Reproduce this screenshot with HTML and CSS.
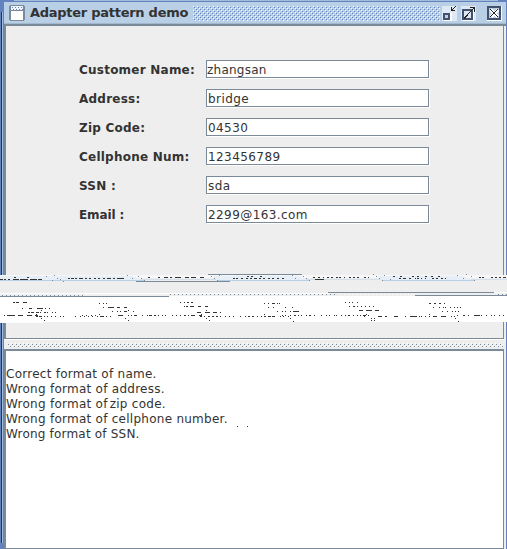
FILE: index.html
```html
<!DOCTYPE html>
<html lang="en">
<head>
<meta charset="utf-8">
<title>Adapter pattern demo</title>
<link rel="stylesheet" href="styles.css">
</head>
<body>
<div class="desktop">
<main class="window">
<header class="titlebar">
<svg class="app-icon" width="16" height="16" shape-rendering="crispEdges"><path fill="#7a8a99" d="M1 0h14v1h1v14h-1v1H1v-1H0V1h1z"/><path fill="#eef4fb" d="M2 1h12v4H2z"/><path fill="#fff" d="M2 6h12v9H2z"/><path stroke="#6382bf" stroke-dasharray="1 2" d="M3 2.5h11M4 4.5h10"/></svg>
<h1>Adapter pattern demo</h1>
<div class="grip"></div>
<div class="controls">
<svg width="15" height="15" shape-rendering="crispEdges"><path fill="#fff" d="M0 0h15v15H0z" opacity=".55"/><path fill="#fff" d="M2 7h8v8H2z"/><path fill="none" stroke="#42516f" stroke-width="2" d="M2 8h5v5H2z"/><path fill="#b8cfe5" d="M3 9h3v3H3z"/><path fill="#222" d="M9 1h1v3h3v1H9zM10 3h1v1h-1zM11 2h1v1h-1zM12 1h1v1h-1zM13 0h1v1h-1z"/></svg>
<svg width="15" height="15" shape-rendering="crispEdges"><path fill="#fff" d="M0 0h15v15H0z" opacity=".55"/><path fill="#fff" d="M2 4h11v11H2z"/><path fill="none" stroke="#42516f" stroke-width="2" d="M2 4h9v9H2z"/><path fill="#dbe7f3" d="M3 5h7v7H3z"/><path stroke="#222" fill="none" d="M3 12.5L13 2M9 1.5h4.5V6"/></svg>
<svg class="close" width="15" height="15" shape-rendering="crispEdges"><path fill="#fff" d="M0 0h15v15H0z"/><path fill="#b8cfe5" stroke="#42516f" stroke-width="2" d="M1 1h12v12H1z"/><path stroke="#fff" stroke-width="3" d="M4 4l7 7M11 4l-7 7"/><path stroke="#222" d="M3 3l8 8M11 3l-8 8"/></svg>
</div>
</header>
<section class="form">
<label><span>Customer Name:</span><input class="word" value="zhangsan"></label>
<label><span>Address:</span><input value="bridge"></label>
<label><span>Zip Code:</span><input value="04530"></label>
<label><span>Cellphone Num:</span><input value="123456789"></label>
<label><span>SSN :</span><input value="sda"></label>
<label><span class="tight">Email :</span><input value="2299@163.com"></label>
</section>
<div class="divider"></div>
<section class="log">
<p>Correct format of name.</p>
<p>Wrong format of address.</p>
<p>Wrong format of<i></i>zip code.</p>
<p>Wrong format of cellphone number.</p>
<p class="tight">Wrong format of SSN.</p>
</section>
</main>
</div>
<svg class="tear" id="tear" width="507" height="549" shape-rendering="crispEdges"></svg>
<script src="tear.js"></script>
</body>
</html>
```
FILE: styles.css
```css
* { box-sizing: border-box; }
body { margin: 0; width: 507px; height: 549px; overflow: hidden; position: relative; background: #6382bf; font-family: "DejaVu Sans", sans-serif; font-size: 12px; color: #333; }
.desktop { height: 549px; padding: 2px 1px 0 4px; background: linear-gradient(90deg, #6382bf 1px, #333 1px 2px, #a3bddd 2px 3px, #6382bf 3px); }
.window { height: 547px; display: flex; flex-direction: column; background: #eee; }
.titlebar { height: 24px; flex: none; display: flex; align-items: center; background: #b8cfe5; border-bottom: 2px solid #7a8a99; box-shadow: inset 0 -1px #a3b8cc; padding: 0 1px 0 5px; }
.app-icon { flex: none; }
h1 { margin: 0 0 0 5px; width: 158px; font-size: 13px; line-height: 20px; letter-spacing: -.27px; white-space: nowrap; }
.grip, .divider { --white: conic-gradient(at 1px 1px, transparent 75%, #fff 0); }
.grip { --dot: conic-gradient(at 1px 1px, transparent 75%, #6382bf 0); height: 15px; width: 247px; margin-left: 5px; background: var(--white) 0 0 / 4px 4px, var(--white) 2px 2px / 4px 4px, var(--dot) 1px 1px / 4px 4px, var(--dot) 3px 3px / 4px 4px; }
.controls { display: flex; gap: 4px; margin-left: 2px; }
.controls svg { flex: none; }
.controls .close { margin-left: 7px; }
.form { height: 313px; flex: none; padding: 34px 0 0 73px; border-left: 2px solid #7a8a99; border-right: 1px solid #7a8a99; border-bottom: 1px solid #7a8a99; margin-right: 2px; display: flex; flex-direction: column; gap: 10px; }
label { display: flex; height: 19px; align-items: flex-start; }
label span { width: 127px; line-height: 21px; font-size: 12px; font-weight: bold; letter-spacing: .23px; white-space: nowrap; }
label span.tight { letter-spacing: -.1px; }
input { width: 223px; height: 18px; border: 1px solid #7a8a99; border-radius: 0; outline: 0; padding: 1px 1px 0; background: #fff; box-shadow: 1px 1px #fff; font: 12px "DejaVu Sans", sans-serif; letter-spacing: .42px; color: #333; }
input.word { padding-left: 0; letter-spacing: .25px; }
.divider { --dot: conic-gradient(at 1px 1px, transparent 75%, #7a8a99 0); height: 10px; flex: none; margin-right: 1px; background: var(--dot) 0 1px / 4px 4px, var(--dot) 2px 3px / 4px 4px, var(--white) 3px 0 / 4px 4px, var(--white) 1px 2px / 4px 4px; background-origin: content-box; background-clip: content-box; padding: 3px 2px 2px 4px; border-top: 1px solid #fff; }
.log { flex: 1; margin-right: 2px; padding: 16px 0 0; background: #fff; border: 1px solid #7a8a99; border-top-width: 2px; border-left-width: 2px; }
p { margin: 0; height: 15px; line-height: 15px; letter-spacing: .26px; white-space: nowrap; }
p.tight { letter-spacing: .2px; }
p i { display: inline-block; width: 2px; }
.tear { position: absolute; left: 0; top: 0; pointer-events: none; }
```
FILE: tear.js
```js
// Horizontal runs of pixels, by row: "start" or "start-end" (inclusive).
const dark = {
276: "247-248,251-252,260-261,393-394,400-401,412-413,417-418,425-426,431-432,438-439",
277: "14-15,27-28,148-149,158-159,164-167,170-171,175-180,185-188,191-195,200-203,313-314,318-319,323,327-328,331-332,336-337,339-340,344,349-350,353-354,357-358,364-365,368,479-480,482-483,491-492,495-496,499-500,503-505",
278: "68-69,71-73,75-76,79-82,85-86,89-90,94-95,98-99,103-104,107-110,113-114,117-123,233-234,236-237,241-242,246-247,250-251,254-256,259-260,263-264,268-269,272-273,277-278,282-283,399-400,403-405,409-410,415,417-418,421,425,432-433,436-437,441-442,445",
279: "0-2,4-5,8-9,13-18,20-27,30-36,38-41,315-323",
302: "13-14,16-18,23-26,180,184,187-188,191-192,345,349,352,357",
303: "99,103,106,264,268,272-274,277,279,429-430,434-435,439-440,444",
306: "184,186-187,190-193,198-200,205-207,349,353-354,357,361,365,369,373",
307: "103,108-113,117-119,124-126,268,273,285,292,433,439,443,445,450,454,457,460",
308: "22,29-31,37-42,45,49",
310: "41,128,206,359-362,366-371,375-378",
311: "112,117,120,124-126,133,277,282,285,290,293-298,442,447,452,455,458",
312: "28-29,31-33,36-38,40,44-45,47,52,55,197-200,205-209,213-216,220",
314: "36,99,201,264,366,429",
315: "4,7-14,18-22,27-31,35-37,82,86,91,95,118-122,128,131,134-136,142,147,149-151,154-155,158,162,165,172,176,180,184-185,188,191-194,199-201,282,285,290,294-295,298,301,306,309-310,314,321,326,329,334,336,341,345,348-349,353,357,360,363-365,368,457,463-464,468,474-479,481,486,491,494,499,503",
316: "36-37,39-41,44,47,51,55,60,63,75,80,84,88,92,97,100-103,106,110,200-201,204,208-209,212-213,216-217,220,225,229,233,240,245,248-249,252-253,257,261,264-265,268-270,272-274,280,283,288,364,378-381,385-386,394-397,405,410-416,419,421,425,429,433-436,441-445,451,454",
318: "41,125,206,290,371,374,455",
320: "44,128,209,371,374", 321: "293,458",
426: "237,247"
};
const gray = {
274: "208-301,373,466",
275: "54,127,219,292,384,457",
276: "46,138,211,303,376,471",
278: "57,132,141,214,295,306,379,463",
279: "60,390",
280: "52,144,217,309,382,474",
281: "63,136-229",
292: "328-493", 295: "415-506", 296: "0-168"
};
const svg = document.getElementById("tear");
function add(color, d) {
  const p = document.createElementNS("http://www.w3.org/2000/svg", "path");
  p.setAttribute("fill", color);
  p.setAttribute("d", d);
  svg.append(p);
}
function runs(rows) {
  return Object.entries(rows).map(([y, list]) => list.split(",").map(r => {
    const [a, b = a] = r.split("-").map(Number);
    return `M${a} ${y}h${b - a + 1}v1H${a}z`;
  }).join("")).join("");
}
function dots(y, from, to) {
  let d = "";
  for (let x = from; x < to; x += 4) d += `M${x} ${y}h1v1h-1z`;
  return d;
}
add("#eee", "M0 275h507v22H0z");
add("#f7f7f9", "M0 275h507v3H0z");
add("#d3dfeb", "M0 279h507v1H0z");
for (const x of [-30, 52, 217, 382]) {
  add("#e6eef7", `M${x - 5} 276h85l10 4H${x}z`);
  add("#b8cfe5", `M${x} 280h92v1H${x}z`);
}
add("#fff", "M0 297h169v-1h338v26H43v1H0z");
add("#fff", "M0 293h330v1H0zM493 292h14v1h-14z" + dots(294, 86, 170) + dots(294, 340, 415));
add("#7a8a99", runs(gray) + dots(295, 2, 84) + dots(294, 170, 336) + dots(294, 498, 507));
add("#333", runs(dark));
// Outer frame edge along the top and the bottom-left corner.
add("#a3bddd", "M14 0h484v1H14z");
add("#6382bf", "M0 0h4v12H0zM0 543h4v6H0z");
```
